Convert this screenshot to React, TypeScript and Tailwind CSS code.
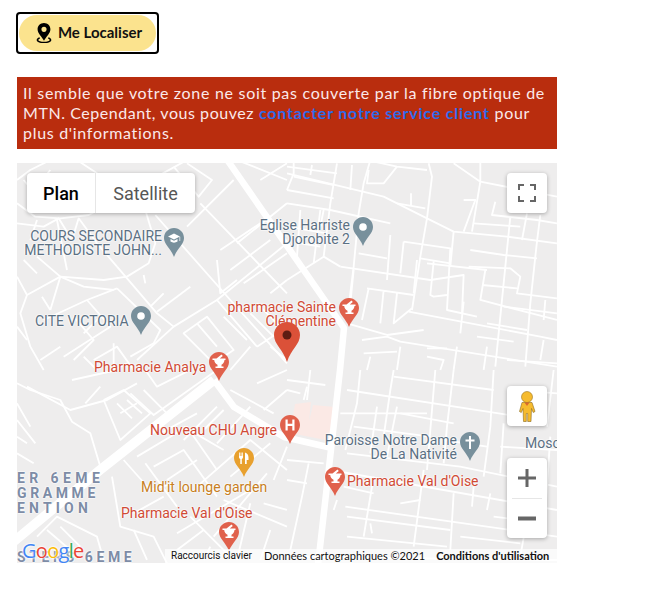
const roadsTopLeft = [
  "M0 130 L55 170 L130 175 L215 165 L300 120 L420 50 L510 0",
  "M0 190 L80 200 L125 175 L165 240 L185 175 L240 250 L300 320",
  "M60 180 L40 240 M120 180 L150 330 M385 150 L415 250 L395 310 L330 350",
  "M415 165 L640 420 L810 610",
  "M550 130 L810 400 M510 200 L650 60 M610 270 L730 190 M640 330 L760 240 M680 370 L810 280",
  "M510 10 L585 60 L545 110 L470 20",
  "M300 320 L420 460 L470 500 L600 420 L720 560",
  "M470 500 L360 600 M500 520 L570 470 L650 570 L590 610 Z",
  "M420 455 L520 380",
  "M30 405 L130 350 L260 360 L330 350 M130 350 L200 380 L290 390",
  "M30 405 L10 460 L40 560 L80 630 M80 480 L210 420 L300 385 M75 410 L100 450",
  "M210 420 L280 500 L140 590 M250 470 L200 520 M300 385 L430 510 L410 550 L340 590",
  "M380 345 L385 370 M290 550 L290 630 L330 610 M0 500 L30 540 M200 590 L240 630",
  "M720 560 L810 500 M600 300 L610 400 L660 360",
  "M0 60 L40 30 L100 0 M180 0 L240 40 L300 120 M330 60 L400 150",
  "M60 290 L130 350 L100 450 M230 600 L300 560 L350 630 M0 350 L30 405",
  "M170 470 L230 540 L170 600 M440 400 L400 440 M720 430 L810 520",
  "M600 420 L810 250 M700 560 L640 630 M660 250 L810 130 M660 0 L810 60 M730 60 L810 10",
  "M540 490 L600 560 M620 470 L690 540 M700 460 L770 530 M760 400 L810 360 M760 560 L810 600",
  "M100 30 L60 80 M20 60 L70 120 M130 560 L70 600 M20 300 L60 340",
]

const roadsTopRight = [
  "M20 0 L20 40 L0 90 M150 10 L130 130 L110 290 M250 0 L230 70 L215 160 L200 320 L185 440",
  "M0 40 L290 110 L420 175 L500 215 L660 230 L810 250",
  "M0 90 L140 115 M20 50 L140 75 M75 15 L70 45 M195 15 L190 90 M245 30 L240 70 L290 70 L330 20",
  "M425 10 L435 50 L420 175 L400 290 L375 450",
  "M330 130 L415 145 M372 100 L372 135 M500 10 L580 65 L810 110 M580 0 L580 65 L565 155 L555 215",
  "M530 120 L565 120 L530 215 M625 125 L615 165 L750 180 L810 190 M670 170 L655 320 L640 470 L625 620",
  "M720 160 L705 240 M760 165 L750 245 L745 290 L730 430 L715 620",
  "M160 320 L430 360 L530 345 L525 460 M200 330 L190 430 M240 385 L380 405 M245 385 L225 480 M290 390 L280 490 M330 400 L320 490 L375 445",
  "M0 360 L110 290 L160 320 M40 150 L30 290 M100 150 L80 310",
  "M215 280 L300 295 M310 225 L300 360 M350 245 L340 340 M350 245 L490 265 L480 450 L570 470",
  "M400 295 L490 310 M390 300 L380 400 M440 305 L430 405 L440 410 L480 405",
  "M500 215 L490 320 M550 270 L650 285 L750 295 M545 320 L670 325 L700 350 L690 400 L810 415",
  "M595 330 L580 420 L810 480 M585 375 L690 385 M530 425 L520 520 M775 420 L770 480",
  "M180 490 L300 525 L410 510 M365 455 L760 530 L810 540 M225 540 L300 530 L340 545 L810 620",
  "M230 580 L330 575 M420 565 L480 565 M570 530 L680 545 M510 560 L500 630 M770 540 L760 600",
  "M0 130 L130 150 L310 190 M0 200 L120 220 M110 150 L100 200 M560 190 L700 200 M0 20 L150 40",
  "M650 440 L810 460 M600 490 L720 510 M420 310 L600 330 M240 0 L330 20 L420 30 M40 250 L100 260",
  "M250 590 L240 630 M340 560 L330 630 M420 590 L470 600 L460 630 M600 560 L590 630 M660 600 L810 610",
]

const roadsBottomLeft = [
  "M0 40 L40 60 L130 90 L165 155 L220 190 L250 290",
  "M30 50 L160 120 L270 90 L360 40 M0 150 L55 220 M0 100 L40 170",
  "M165 30 L300 0 M205 100 L250 50 M260 90 L310 210 L400 130 L320 60 L260 90",
  "M310 130 L360 100 M340 70 L410 135 L600 0",
  "M380 60 L450 130 M385 0 L420 50 L520 0",
  "M360 260 L510 170 L600 300 M410 290 L500 240 L600 380 M450 330 L540 270 M385 280 L480 410",
  "M320 270 L400 360 L470 340 M285 320 L310 470 L410 500 L450 580",
  "M600 110 L500 210 M500 170 L620 240 M540 350 L700 210 L810 300",
  "M620 390 L810 470 M480 490 L700 360 M590 500 L750 310 M700 400 L660 570 M760 480 L730 570",
  "M60 500 L120 440 L240 500 L260 570 M90 480 L160 540 M130 470 L190 530",
  "M0 250 L50 280 M0 200 L30 220 M350 480 L390 570 M640 60 L770 130",
  "M620 120 L560 180 M700 110 L600 220 M760 220 L640 320 M810 230 L770 330 M430 190 L540 130",
  "M480 540 L560 480 M350 430 L440 380 M520 440 L640 560 M740 400 L810 420",
  "M300 100 L345 145 M330 90 L375 130 M720 40 L810 0 M810 60 L740 120 M580 530 L560 570",
]

const roadsBottomRight = [
  "M0 30 L115 45 M220 0 L210 100 L175 240 M320 0 L310 60 L290 200 M445 0 L435 120 L420 300",
  "M70 0 L60 90 M180 60 L700 140 M500 0 L480 170 L470 280 M620 0 L610 170 L590 320",
  "M160 130 L420 130 M270 110 L250 250 M330 110 L300 260 M0 270 L110 280",
  "M50 90 L60 50 M65 280 L45 380 L10 540 M180 250 L520 290 L810 350",
  "M340 130 L500 160 M130 300 L810 420",
  "M175 410 L600 470 L810 500 M260 320 L230 500 M410 300 L380 530",
  "M340 400 L400 390 M150 390 L140 420 M500 370 L490 540 M610 370 L600 420 M730 390 L700 560",
  "M180 440 L490 480 M250 460 L255 490 M680 60 L810 70 M650 160 L640 310 M790 200 L770 500",
  "M800 0 L780 170 M0 560 L810 570 M560 350 L555 410",
  "M0 60 L40 70 M320 20 L620 60 M200 170 L430 200 M470 210 L600 230 M640 230 L810 240",
  "M180 500 L480 530 M520 500 L700 520 M60 340 L0 330 M170 350 L260 370 M620 440 L780 460",
]

const labels = [
  { text: "COURS SECONDAIRE", place: "right-[395px] top-[65px] text-[#5b7083]" },
  { text: "METHODISTE JOHN...", place: "right-[395px] top-[79px] text-[#5b7083]" },
  { text: "CITE VICTORIA", place: "left-[18px] top-[150px] text-[#5b7083]" },
  { text: "Eglise Harriste", place: "right-[207px] top-[54px] text-[#5b7083]" },
  { text: "Djorobite 2", place: "right-[207px] top-[68px] text-[#5b7083]" },
  { text: "pharmacie Sainte", place: "right-[221px] top-[136px] text-[#d04a35]" },
  { text: "Clémentine", place: "right-[221px] top-[150px] text-[#d04a35]" },
  { text: "Pharmacie Analya", place: "left-[77px] top-[196px] text-[#d04a35]" },
  { text: "Nouveau CHU Angre", place: "left-[133px] top-[259px] text-[#d04a35]" },
  { text: "Mid'it lounge garden", place: "left-[124px] top-[316px] text-[#c77e22]" },
  { text: "Pharmacie Val d'Oise", place: "left-[104px] top-[342px] text-[#d04a35]" },
  { text: "Paroisse Notre Dame", place: "right-[100px] top-[269px] text-[#5b7083]" },
  { text: "De La Nativité", place: "right-[100px] top-[283px] text-[#5b7083]" },
  { text: "Pharmacie Val d'Oise", place: "left-[330px] top-[310px] text-[#d04a35]" },
  { text: "Mosc", place: "left-[508px] top-[272px] text-[#5b7083]" },
  { text: "ER 6EME", place: "left-[0px] top-[307px] font-bold text-[#7d8ca6] tracking-[4.4px] text-[13px]" },
  { text: "GRAMME", place: "left-[0px] top-[322px] font-bold text-[#7d8ca6] tracking-[3.6px] text-[13px]" },
  { text: "ENTION", place: "left-[0px] top-[337px] font-bold text-[#7d8ca6] tracking-[4.2px] text-[13px]" },
  { text: "STERS 6EME", place: "left-[0px] top-[386px] font-bold text-[#7d8ca6] tracking-[3.6px] text-[13px]" },
]

function Pin({ color, className, children }: { color: string; className: string; children?: React.ReactNode }) {
  return (
    <svg viewBox="0 0 20 29" className={`absolute w-[20px] h-[29px] ${className}`}>
      <path d="M10 0C4.500 0 0 4.400 0 10c0 6.500 6.500 10 10 19 3.500-9 10-12.500 10-19C20 4.400 15.500 0 10 0z" fill={color} />
      {children}
    </svg>
  )
}

const mortar = (
  <path d="M3.500 6.500h4l5-4 1.300 1.500-3 2.500h5.700v1.500h-1c-.3 2.500-1.500 4-3 4.800v1.700h2V16H6.500v-1.500h2v-1.700C6.800 12 5.500 10.500 5.200 8H3.500z" fill="#fff" />
)

const panel = "bg-white rounded-sm shadow-[0_1px_4px_rgba(0,0,0,0.3)]"

export default function App() {
  return (
    <div className="w-[646px] h-[606px] bg-white pt-3 pl-4 font-['Lato','Open_Sans',sans-serif]">
      <button className="w-[143px] h-[42px] border-2 border-black rounded-[4px] bg-white p-px block">
        <span className="flex items-center justify-center gap-[3px] h-full rounded-full bg-[#fbe38e] pr-1 pl-1">
          <svg viewBox="0 0 24 24" className="w-[22px] h-[24px]" fill="black">
            <path d="M12 1C8 1 5 4 5 8c0 4.500 4.500 8 7 12.500C14.500 16 19 12.500 19 8c0-4-3-7-7-7zm0 4.200a2.800 2.800 0 1 1 0 5.600 2.800 2.800 0 0 1 0-5.600z" />
            <path d="M7 16.500C5 17.300 4 18.300 4 19.500 4 21.700 7.500 23 12 23s8-1.300 8-3.500c0-1.200-1-2.200-3-3l-.8 1.400c1.200.4 2 1 2 1.600 0 1-3 2-6.200 2s-6.200-1-6.200-2c0-.6.800-1.200 2-1.600z" />
          </svg>
          <span className="text-[15px] font-bold text-[#111] pb-0.5">Me Localiser</span>
        </span>
      </button>

      <p className="ml-px mt-[23px] w-[540px] h-[72px] bg-[#b92d0e] px-1.5 py-1.5 text-[16px] leading-[20px] text-[#fbe9ea] tracking-[0.7px]">
        Il semble que votre zone ne soit pas couverte par la fibre optique de{" "}
        <span className="tracking-[0.55px]">MTN. Cependant, vous pouvez</span>{" "}
        <a className="font-bold text-[#2f6be8] tracking-[0.8px]">contacter notre service client</a> pour plus d'informations.
      </p>

      <div className="relative ml-px mt-3.5 w-[540px] h-[400px] overflow-hidden bg-[#eeeded] font-['Roboto',sans-serif]">
        <svg viewBox="0 0 540 400" className="absolute inset-0 w-full h-full" fill="none" stroke="#fff" strokeLinejoin="round">
          <path d="M278 241 L294 239 L292 258 L296 242 L318 244 L314 278 L283 272 L273 270 Z" fill="#fbe9e5" stroke="none" />
          <g strokeWidth="5.500" transform="translate(0 -3) scale(.3333)">
            {roadsTopLeft.map((d) => <path key={d} d={d} />)}
          </g>
          <g strokeWidth="5.500" transform="translate(270 -3) scale(.3333)">
            {roadsTopRight.map((d) => <path key={d} d={d} />)}
          </g>
          <g strokeWidth="5.500" transform="translate(0 207) scale(.3333)">
            {roadsBottomLeft.map((d) => <path key={d} d={d} />)}
          </g>
          <g strokeWidth="5.500" transform="translate(270 207) scale(.3333)">
            {roadsBottomRight.map((d) => <path key={d} d={d} />)}
          </g>
          <path d="M211 -2 L327 165 L323 207 L301 402" strokeWidth="6.500" />
          <path d="M-5 380 L83 307 L197 217" strokeWidth="9.500" />
          <path d="M197 217 L217 244 L267 274 L315 285" strokeWidth="6.500" />
        </svg>

        {labels.map((l) => (
          <span
            key={l.text + l.place}
            className={`absolute whitespace-nowrap text-[14px] leading-[16px] [text-shadow:0_0_2px_#fff,0_0_2px_#fff,0_0_2px_#fff] ${l.place}`}
          >
            {l.text}
          </span>
        ))}

        <Pin color="#78909c" className="left-[147px] top-[65px]">
          <path d="M10 5.500l6 3-6 3-6-3zM6.500 11v2.500c2 1.500 5 1.500 7 0V11L10 12.800zM15.500 9v4h.7V8.700z" fill="#fff" />
        </Pin>
        <Pin color="#78909c" className="left-[114px] top-[143px]">
          <circle cx="10" cy="10" r="3.800" fill="#fff" />
        </Pin>
        <Pin color="#78909c" className="left-[336px] top-[54px]">
          <circle cx="10" cy="10" r="3.800" fill="#fff" />
        </Pin>
        <Pin color="#e0614c" className="left-[322px] top-[135px]">{mortar}</Pin>
        <Pin color="#e0614c" className="left-[192px] top-[189px]">{mortar}</Pin>
        <Pin color="#e0614c" className="left-[263px] top-[252px]">
          <path d="M5.500 4.500h2.200v4.300h4.600V4.500h2.200v11h-2.200v-4.500H7.700v4.500H5.500z" fill="#fff" />
        </Pin>
        <Pin color="#e8a02e" className="left-[217px] top-[285px]">
          <path d="M5 4.500v4.500c0 1 .6 1.700 1.300 1.900V16h1.500v-5.100C8.500 10.700 9 10 9 9V4.500H8.200V8H7.500V4.500h-.9V8h-.8V4.500zM11 16V4.500c2.200.5 3.500 2.500 3.500 5v2.500h-1.800v4z" fill="#fff" />
        </Pin>
        <Pin color="#e0614c" className="left-[202px] top-[359px]">{mortar}</Pin>
        <Pin color="#e0614c" className="left-[308px] top-[304px]">{mortar}</Pin>
        <Pin color="#78909c" className="left-[443px] top-[269px]">
          <path d="M9 4h2v3.500h3.500v2H11V17H9V9.500H5.500v-2H9z" fill="#fff" />
        </Pin>

        <svg viewBox="0 0 26 40" className="absolute left-[257px] top-[159px] w-[26px] h-[40px]">
          <path d="M13 0C5.800 0 0 5.700 0 13c0 9.500 9 14 13 27 4-13 13-17.500 13-27C26 5.700 20.200 0 13 0z" fill="#db5138" />
          <circle cx="13" cy="13" r="4.500" fill="#5e1c12" />
        </svg>

        <div className="absolute inset-0 flex flex-col p-2.5">
          <div className="flex justify-between">
            <div className={`flex h-10 w-[168px] text-[18px] ${panel}`}>
              <div className="flex w-[69px] items-center justify-center font-medium text-black border-r border-[#e6e6e6]">Plan</div>
              <div className="flex flex-1 items-center justify-center text-[#565656]">Satellite</div>
            </div>
            <div className={`flex size-10 items-center justify-center ${panel}`}>
              <svg viewBox="0 0 18 18" className="size-[18px]" fill="#666">
                <path d="M0 0h6v2H2v4H0zM12 0h6v6h-2V2h-4zM0 12h2v4h4v2H0zM16 12h2v6h-6v-2h4z" />
              </svg>
            </div>
          </div>

          <div className="mt-[173px] flex flex-col items-end gap-8">
            <div className={`flex size-10 items-center justify-center ${panel}`}>
              <svg viewBox="0 0 18 31" className="w-[18px] h-[31px]">
                <circle cx="9" cy="6" r="5.500" fill="#f6bb2e" stroke="#9a7420" strokeWidth=".6" />
                <path d="M4 11.500h10l3 9-1.800 1-1.700-4-.5 13H9.700v-8H8.300v8H5.500l-.5-13-1.700 4-1.800-1z" fill="#f6bb2e" stroke="#8a6a20" strokeWidth=".6" />
                <path d="M6.500 11.500h5L9 15z" fill="#d9682b" />
              </svg>
            </div>
            <div className={`flex h-20 w-10 flex-col items-center ${panel}`}>
              <div className="flex h-10 items-center justify-center">
                <svg viewBox="0 0 18 18" className="size-[18px]" fill="#666">
                  <path d="M7.500 0h3v7.500H18v3h-7.500V18h-3v-7.500H0v-3h7.500z" />
                </svg>
              </div>
              <div className="h-px w-[30px] bg-[#e6e6e6]" />
              <div className="flex h-10 items-center justify-center">
                <svg viewBox="0 0 18 18" className="size-[18px]" fill="#666">
                  <path d="M0 7.500h18v4H0z" />
                </svg>
              </div>
            </div>
          </div>
        </div>

        <div className="absolute inset-x-0 bottom-0 flex items-end justify-between pl-[5px]">
          <div className="text-[20px] leading-[25px] font-medium font-['Open_Sans',sans-serif] tracking-[-0.7px] [text-shadow:0_0_2px_#fff,0_0_2px_#fff,0_0_3px_#fff]">
            <span className="text-[#4285f4]">G</span>
            <span className="text-[#ea4335]">o</span>
            <span className="text-[#fbbc05]">o</span>
            <span className="text-[#4285f4]">g</span>
            <span className="text-[#34a853]">l</span>
            <span className="text-[#ea4335]">e</span>
          </div>
          <div className="flex h-[14px] w-[392px] items-center bg-white/70 pl-[6px] text-[11px] leading-[14px] text-[#111]">
            <span className="font-['Roboto',sans-serif] text-[10px] mr-3">Raccourcis clavier</span>
            <span className="mr-[11px] font-['Lato',sans-serif]">Données cartographiques ©2021</span>
            <span className="font-['Lato',sans-serif] font-bold">Conditions d'utilisation</span>
          </div>
        </div>
      </div>
    </div>
  )
}
